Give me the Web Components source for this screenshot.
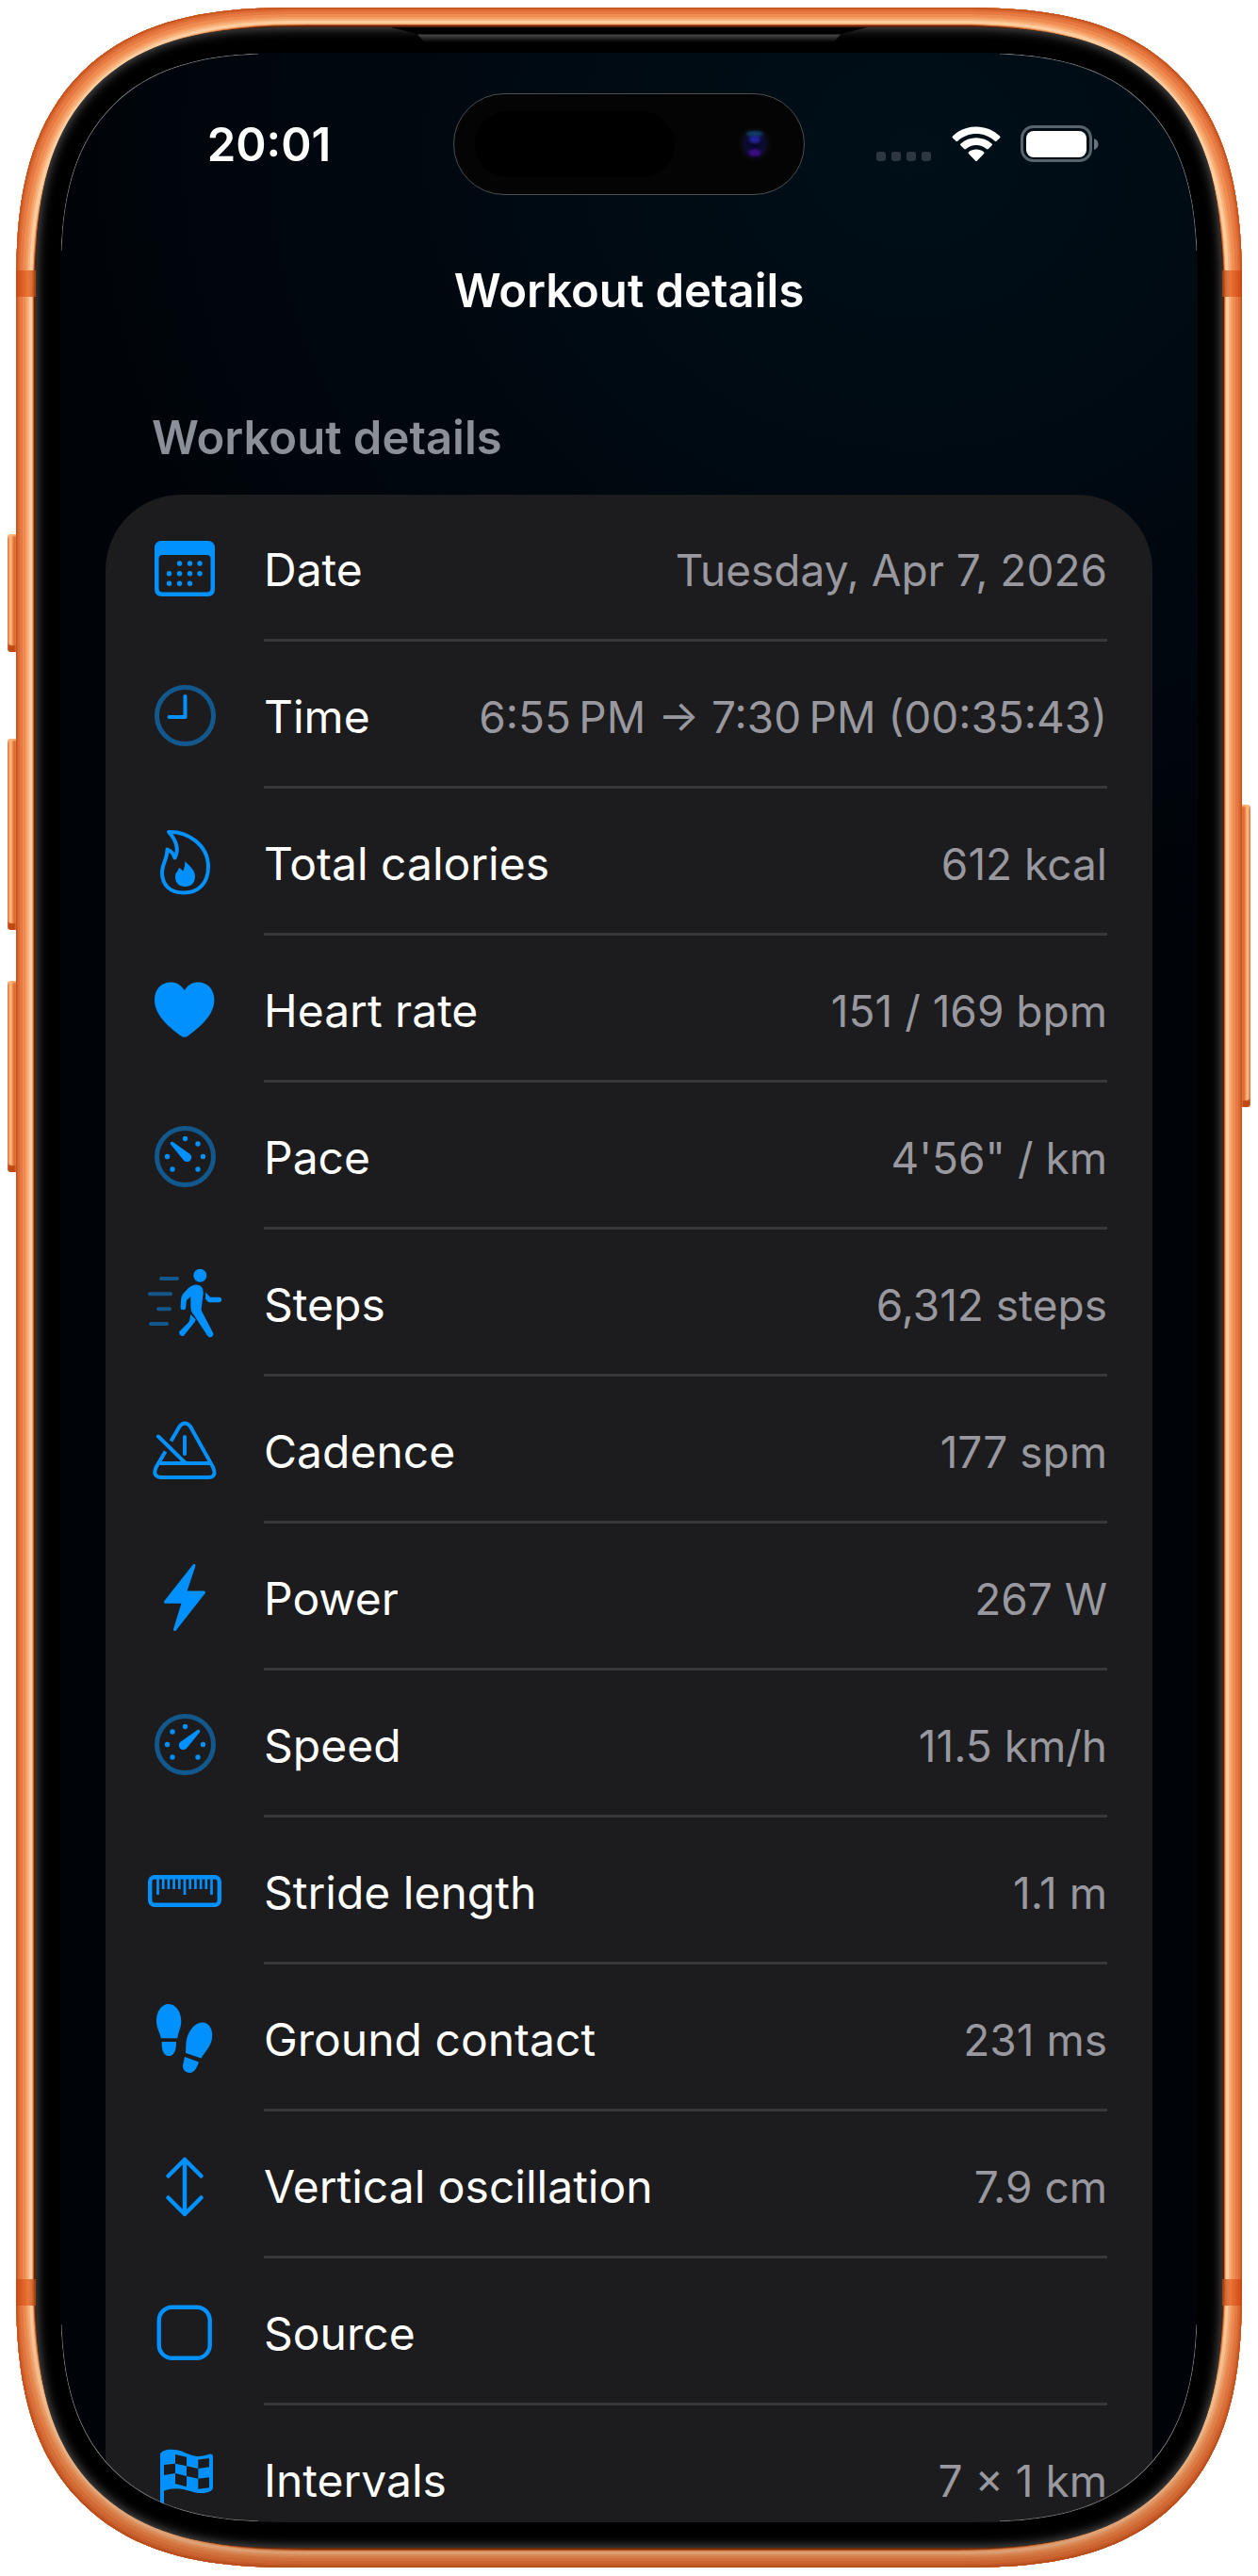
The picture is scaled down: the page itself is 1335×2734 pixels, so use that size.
<!DOCTYPE html>
<html lang="en">
<head>
    <meta charset="UTF-8">
    <meta name="viewport" content="width=device-width, initial-scale=1.0">
    <title>Workout details</title>
    <style>
        body {
            margin: 0;
            padding: 8px 17px 9px;
            box-sizing: border-box;
            height: 100vh;
            background: #fff;
            color: #fff;
            font-family: Inter, "Liberation Sans", sans-serif;
            font-size: 49px;
            line-height: 60px;
        }
    </style>
</head>
<body>
    <!-- ############ Templates ############ -->
    <template id="tpl-phone">
        <style>
            :host {
                display: block;
                position: relative;
                height: 100%;
            }
            .frame, .bezel, .screen {
                box-sizing: border-box;
                height: 100%;
            }
            .frame {
                position: relative;
                padding: 21px;
                border-radius: 240px;
                background: #e06a30;
                box-shadow:
                    inset 0 0 0 1px #c4541f,
                    inset 0 0 0 2px #cf5d28,
                    inset 0 0 0 4px #dc6b34,
                    inset 0 0 0 7px #e67a42,
                    inset 0 0 0 10px #ee8c52,
                    inset 0 0 0 12px #f49e64,
                    inset 0 0 0 14px #f9b27c,
                    inset 0 0 0 17px #fdcd9f,
                    inset 0 0 0 18px #f2a468,
                    inset 0 0 0 19px #bd5c28,
                    inset 0 0 0 21px #5a2208;
            }
            /* the metal gets darker towards the bottom edge */
            .frame::before {
                content: "";
                position: absolute;
                inset: 0;
                border-radius: inherit;
                corner-shape: inherit;
                background: linear-gradient(transparent calc(100% - 300px), rgba(150, 60, 20, .35));
            }
            .bezel {
                position: relative;
                padding: 27px 26px;
                border-radius: 220px;
                background: #000;
                box-shadow: inset 0 0 12px 1px #5a5a5a;
            }
            .screen {
                position: relative;
                border-radius: 192px;
                overflow: hidden;
                background: radial-gradient(ellipse 1000px 900px at 75% 4%, #000f18, #00080f 55%, #000308 100%);
            }
            /* thin light line that shows only along the corners of the glass */
            .glint {
                position: absolute;
                inset: 0;
                border: 1px solid #777;
                border-radius: inherit;
                pointer-events: none;
                --m: linear-gradient(#000 0 0);
                mask: var(--m) 0 0, var(--m) 100% 0, var(--m) 0 100%, var(--m) 100% 100%;
                mask-size: 210px 210px;
                mask-repeat: no-repeat;
            }
            .earpiece {
                position: absolute;
                top: 0;
                left: 50%;
                width: 506px;
                height: 16px;
                transform: translateX(-50%);
                background: linear-gradient(#000 0 7px, #444 8px, #000 16px);
                clip-path: polygon(0 0, 100% 0, 478px 7px, 470px 16px, 36px 16px, 28px 7px);
            }
            .band {
                position: absolute;
                width: 21px;
                height: 28px;
                background: linear-gradient(90deg, #c9440c, #e8682c 60%, #b0440f);
                opacity: .8;
            }
            .band.top { top: 279px; }
            .band.bottom { bottom: 278px; }
            .band.left { left: 0; }
            .band.right { right: 0; transform: scaleX(-1); }
            .key {
                position: absolute;
                width: 9px;
                border-radius: 4px 0 0 4px;
                background: linear-gradient(90deg, #d86a34 0 1px, #ffb57a 2px 4px, #e57a40 6px, #cf5a24);
                box-shadow: inset 0 2px 2px #ffb57a, inset 0 -8px 1px -1px #c04a14;
            }
            .key.left { left: -9px; }
            .key.right { right: -9px; transform: scaleX(-1); }
            .action { top: 559px; height: 125px; }
            .up { top: 776px; height: 203px; }
            .down { top: 1033px; height: 203px; }
            .power { top: 846px; height: 321px; }

            @supports (corner-shape: superellipse(1.4)) {
                .frame { border-radius: 300px; corner-shape: superellipse(1.4); }
                .bezel { border-radius: 273px; corner-shape: superellipse(1.4); }
                .screen { border-radius: 240px; corner-shape: superellipse(1.4); }
                .glint { corner-shape: superellipse(1.4); }
            }
        </style>
        <span class="key left action"></span>
        <span class="key left up"></span>
        <span class="key left down"></span>
        <span class="key right power"></span>
        <div class="frame">
            <div class="bezel">
                <span class="earpiece"></span>
                <div class="screen">
                    <slot></slot>
                    <span class="glint"></span>
                </div>
            </div>
            <span class="band top left"></span>
            <span class="band top right"></span>
            <span class="band bottom left"></span>
            <span class="band bottom right"></span>
        </div>
    </template>

    <template id="tpl-status">
        <style>
            :host {
                display: grid;
                grid-template-columns: 1fr 373px 1fr;
                align-items: center;
                padding-top: 43px;
                font-weight: 600;
            }
            .time { padding: 2px 0 0 26px; text-align: center; }
            .island {
                display: flex;
                align-items: center;
                justify-content: space-between;
                box-sizing: border-box;
                height: 108px;
                padding: 0 32px 0 22px;
                border: 1px solid #4c4f52;
                border-radius: 54px;
                background: #040404;
            }
            .speaker { width: 212px; height: 70px; border-radius: 35px; background: #000; }
            .icons {
                display: flex;
                align-items: center;
                justify-content: center;
                padding-right: 30px;
            }
            svg { display: block; }
        </style>
        <div class="time"><slot></slot></div>
        <div class="island">
            <span class="speaker"></span>
            <svg width="40" height="40" viewBox="-20 -20 40 40">
                <defs>
                    <radialGradient id="lens"><stop offset="0" stop-color="#06062c"/><stop offset=".7" stop-color="#0c0c30"/><stop offset="1" stop-color="#08080f"/></radialGradient>
                    <filter id="soft"><feGaussianBlur stdDeviation="1.5"/></filter>
                </defs>
                <circle r="18" fill="#08080b"/>
                <ellipse rx="15" ry="16" fill="url(#lens)"/>
                <ellipse cy="-11" rx="9" ry="3" fill="#114063" filter="url(#soft)"/>
                <ellipse cy="-5" rx="6" ry="4" fill="#2323a0" filter="url(#soft)"/>
                <ellipse cy="9" rx="7" ry="4" fill="#380880" filter="url(#soft)"/>
            </svg>
        </div>
        <div class="icons">
            <svg width="236" height="40" viewBox="0 0 236 40">
                <g fill="#2d3740">
                    <rect x="0" y="28" width="10" height="10" rx="3"/>
                    <rect x="16" y="28" width="10" height="10" rx="3"/>
                    <rect x="32" y="28" width="10" height="10" rx="3"/>
                    <rect x="48" y="28" width="10" height="10" rx="3"/>
                </g>
                <g fill="#fff">
                    <path d="M81 11.500C94-2 118-2 131 11.500Q132 12.500 131 13.500L127.500 16.800Q126.500 17.500 125.500 16.500C115 6.500 97 6.500 86.500 16.500Q85.500 17.500 84.500 16.800L81 13.500Q80 12.500 81 11.500Z"/>
                    <path d="M89.500 19.500C98.500 11 113.500 11 122.500 19.500Q123.500 20.500 122.500 21.500L118.800 25Q117.800 25.800 116.800 25C110.500 19.500 101.500 19.500 95.200 25Q94.200 25.800 93.200 25L89.500 21.500Q88.500 20.500 89.500 19.500Z"/>
                    <path d="M98 28.200C102.500 24.500 109.500 24.500 114 28.200Q115 29.200 114 30.200L107 37.500Q106 38.500 105 37.500L98 30.200Q97 29.200 98 28.200Z"/>
                    <rect x="159" y="6" width="64" height="28" rx="8"/>
                </g>
                <rect x="154.500" y="1.500" width="73" height="36" rx="12" fill="none" stroke="#58636b" stroke-width="3"/>
                <path d="M231 14Q235.500 16 235.500 20T231 26Z" fill="#6b757c"/>
            </svg>
        </div>
    </template>

    <template id="tpl-section">
        <style>
            :host { display: block; padding: 96px 48px 0; }
            h2 {
                margin: 0 48px 30px 49px;
                font-size: 49px;
                line-height: 60px;
                font-weight: 600;
                color: #8b8f97;
            }
            .card { border-radius: 80px 80px 0 0; background: #1c1c1e; }
        </style>
        <h2><slot name="heading"></slot></h2>
        <div class="card"><slot></slot></div>
    </template>

    <template id="tpl-row">
        <style>
            :host {
                display: grid;
                grid-template-columns: 168px 1fr;
                height: 156px;
                padding-right: 48px;
                white-space: nowrap;
                font-size: 48px;
            }
            .icon { display: grid; place-items: center; }
            svg { display: block; width: 84px; height: 84px; overflow: visible; }
            .line {
                display: flex;
                align-items: baseline;
                justify-content: space-between;
                padding-top: 50px;
                box-shadow: inset 0 -3px #38383a;
            }
            .value { font-size: 46px; color: #98989e; }
        </style>
        <div class="icon"></div>
        <div class="line">
            <slot name="label"></slot>
            <span class="value"><slot></slot></span>
        </div>
    </template>

    <template id="tpl-title">
        <style>
            :host { display: block; padding-top: 72px; text-align: center; }
            h1 { margin: 0; font-size: 49px; line-height: 60px; font-weight: 600; }
        </style>
        <h1><slot></slot></h1>
    </template>

    <!-- ############ Page ############ -->
    <phone-shell>
        <status-bar>20:01</status-bar>
        <nav-title>Workout details</nav-title>
        <detail-section>
            <span slot="heading">Workout details</span>
            <detail-row icon="calendar"><span slot="label">Date</span>Tuesday, Apr 7, 2026</detail-row>
            <detail-row icon="clock"><span slot="label">Time</span>6:55&#8239;PM → 7:30&#8239;PM (00:35:43)</detail-row>
            <detail-row icon="flame"><span slot="label">Total calories</span>612 kcal</detail-row>
            <detail-row icon="heart"><span slot="label">Heart rate</span>151 / 169 bpm</detail-row>
            <detail-row icon="pace"><span slot="label">Pace</span>4'56" / km</detail-row>
            <detail-row icon="steps"><span slot="label">Steps</span>6,312 steps</detail-row>
            <detail-row icon="metronome"><span slot="label">Cadence</span>177 spm</detail-row>
            <detail-row icon="bolt"><span slot="label">Power</span>267 W</detail-row>
            <detail-row icon="speed"><span slot="label">Speed</span>11.5 km/h</detail-row>
            <detail-row icon="ruler"><span slot="label">Stride length</span>1.1 m</detail-row>
            <detail-row icon="shoes"><span slot="label">Ground contact</span>231 ms</detail-row>
            <detail-row icon="updown"><span slot="label">Vertical oscillation</span>7.9 cm</detail-row>
            <detail-row icon="square"><span slot="label">Source</span></detail-row>
            <detail-row icon="flag"><span slot="label">Intervals</span>7 × 1 km</detail-row>
        </detail-section>
    </phone-shell>

    <script>
        // ############ Icons, drawn around 0,0 ############
        const BLUE = '#0091ff';
        const DIM = '#12588c';
        const dots = (points, r) => points.map(([x, y]) => `<circle cx="${x}" cy="${y}" r="${r}"/>`).join('');
        const ring = `<circle cx="0.5" cy="0.5" r="30" fill="none" stroke="${DIM}" stroke-width="5"/>`;
        const gauge = ring
            + dots([[0.5, -18.5], [14, -13], [19.5, 0.5], [14, 14], [-13, 14], [-18.5, 0.5]], 2.7)
            + '<path d="M-12.500-15L5.800-2A4.700 4.700 0 1 1-.800 4.700L-15-12.500Q-16-16-12.500-15Z"/>';
        const ticks = [-28.5, -22.8, -17.1, -11.4, -5.7, 0, 5.7, 11.4, 17.1, 22.8, 28.5]
            .map((x, i) => `M${x}-15V${i % 5 ? -2 : 4}`).join('');

        const ICONS = {
            calendar: `<path fill-rule="evenodd" d="M-24-29H24Q32-29 32-21V22Q32 30 24 30H-24Q-32 30-32 22V-21Q-32-29-24-29ZM-23.500-14Q-27.500-14-27.500-10V21.500Q-27.500 25.500-23.500 25.500H23.500Q27.500 25.500 27.500 21.500V-10Q27.500-14 23.500-14Z"/>`
                + dots([[-5.5, -5], [5.5, -5], [16, -5], [-16.5, 5.7], [-5.5, 5.7], [5.5, 5.7], [16, 5.7], [-16.5, 16.3], [-5.5, 16.3], [5.5, 16.3]], 2.7),
            clock: ring + `<path d="M.500-20V2H-16.500" fill="none" stroke="${BLUE}" stroke-width="4" stroke-linecap="round" stroke-linejoin="round"/>`,
            flame: `<path d="M-17-32C2-33 25-19 25 5C25 22 15 32.500-1 32.500C-16 32.500-24 24-24 11C-24 2-18.500-3-18.500-13.500C-14.500-12-12-9-10.500-4.500C-6-13-8-22-17-32Z" fill="none" stroke="${BLUE}" stroke-width="4" stroke-linejoin="round"/>
                <path d="M.500-2C0 1 11 6 11 15C11 22 7 26 .500 26C-6 26-10 22-10 15.500C-10 11-6.500 9-6 6C-4 7-2.500 8-2 10C0 6 .500 2 .500-2Z"/>`,
            heart: `<path d="M-.300-20C-4-26-9-28.500-15-28.500C-25-28.500-32-20.500-32-10C-32 6-18 18-4 28.500Q-.300 31 3.400 28.500C17.400 18 31.400 6 31.400-10C31.400-20.500 24.400-28.500 14.400-28.500C8.400-28.500 3.400-26-.300-20Z"/>`,
            pace: gauge,
            speed: `<g transform="translate(1 0) scale(-1 1)">${gauge}</g>`,
            steps: `<circle cx="16.300" cy="-29.300" r="7"/>
                <path d="M4-16Q8-19.500 12.500-19.500Q20-19 19.800-11L17.500 7Q17.800 8 18.300 9L29.800 31A3.300 3.300 0 0 1 24 34.500L10 13Q6.200 9 6.300 3V-7L2-3L1.200 4.500A2.800 2.800 0 0 1-4.400 4.200L-3.900-4Q-3.700-7-2-9.500Z"/>
                <path d="M6.300 12L11.700 17.500Q11 20 9.500 21.500L-.800 34.500A3.400 3.400 0 0 1-5.500 30L3.500 21Q5 19.500 5.300 17.500Z"/>
                <path d="M22.300-11.500L27-6.300H36.300A2.800 2.800 0 0 1 36.300-.700H27Q25-.700 24-2L22-4.500Z"/>
                <path d="M-25-26H-8M-37-9.700H-15M-28 6.300H-16M-36 22H-19" stroke="${DIM}" stroke-width="4" stroke-linecap="round"/>`,
            metronome: `<g fill="none" stroke="${BLUE}" stroke-width="4">
                <path d="M-14.500-9.500L-5.500-25Q0-32 6-25L30 18Q34.500 29 25 29H-25Q-34.500 28.500-30.500 18.500L-20.500 1.500"/>
                <path d="M-26 14H27"/><path d="M-28-14.500L1 14" stroke-linecap="round"/><path d="M0-14V4" stroke-linecap="round"/></g>`,
            bolt: `<path d="M10-33.500L.500-5H20.500L-10.500 34.500L-1.500 5.200H-20.500Z" stroke="${BLUE}" stroke-width="3" stroke-linejoin="round"/>`,
            ruler: `<rect x="-36.800" y="-14.800" width="73.600" height="29.600" rx="5" fill="none" stroke="${BLUE}" stroke-width="4.400"/>
                <path d="${ticks}" stroke="${BLUE}" stroke-width="2.700"/>`,
            shoes: `<path d="M-17-36C-9-36-3.500-27-3.700-17C-4-10-7-6-7.700 .300H-25.300C-26-6-30-10-30-18C-30-28-25-36-17-36Z"/>
                <path d="M-24.300 4H-9C-9 8-9 19-16.700 19C-24.500 19-24.300 8-24.300 4Z"/>
                <path d="M20-16.500C27-15.500 30-8 29 0C28 9 22 14 17.500 21.500L1 16C1.500 9 1 4 3-2C6-10 12-17 20-16.500Z"/>
                <path d="M0 20L15 25.500C13.500 30 11 37 5 37C-1 36-3 32-1.500 27Z"/>`,
            updown: `<path d="M0-27V31M-17.500-9.500L0-27L17.500-9.500M-17.500 13.500L0 31L17.500 13.500" fill="none" stroke="${BLUE}" stroke-width="4.500" stroke-linecap="round" stroke-linejoin="round"/>`,
            square: `<rect x="-27.300" y="-26.200" width="54" height="54" rx="14" fill="none" stroke="${BLUE}" stroke-width="4.400"/>`,
            flag: `<path fill-rule="evenodd" d="M-26-26C-24-33-8-32 0-28C12-23 16-23 27-26.500Q30-27 30-24V9C30 14 20 17 8 13.500C-4 9.500-12 9-22 12.500V38Q-24 40-26 38Z
                M-10-26L2-23.300V-13.700L-10-16.300ZM14.300-20.500L26-22V-12.700L14.300-11ZM-22-15L-10-16.300V-6L-22-4ZM2-13.700L14.300-11V-.300L2-3ZM-10-6L2-3V8.300L-10 5ZM14.300-.300L26-1.700V9.300L14.300 10.700Z"/>`,
        };

        // ############ Custom elements ############
        class TemplateElement extends HTMLElement {
            constructor() {
                super();
                const tpl = document.getElementById(this.constructor.template);
                this.attachShadow({ mode: 'open' }).appendChild(tpl.content.cloneNode(true));
            }
        }

        customElements.define('phone-shell', class extends TemplateElement {
            static template = 'tpl-phone';
        });
        customElements.define('status-bar', class extends TemplateElement {
            static template = 'tpl-status';
        });
        customElements.define('nav-title', class extends TemplateElement {
            static template = 'tpl-title';
        });
        customElements.define('detail-section', class extends TemplateElement {
            static template = 'tpl-section';
        });
        customElements.define('detail-row', class extends TemplateElement {
            static template = 'tpl-row';
            connectedCallback() {
                const icon = ICONS[this.getAttribute('icon')] || '';
                this.shadowRoot.querySelector('.icon').innerHTML =
                    `<svg viewBox="-42 -42 84 84" fill="${BLUE}" aria-hidden="true">${icon}</svg>`;
            }
        });
    </script>
</body>
</html>
